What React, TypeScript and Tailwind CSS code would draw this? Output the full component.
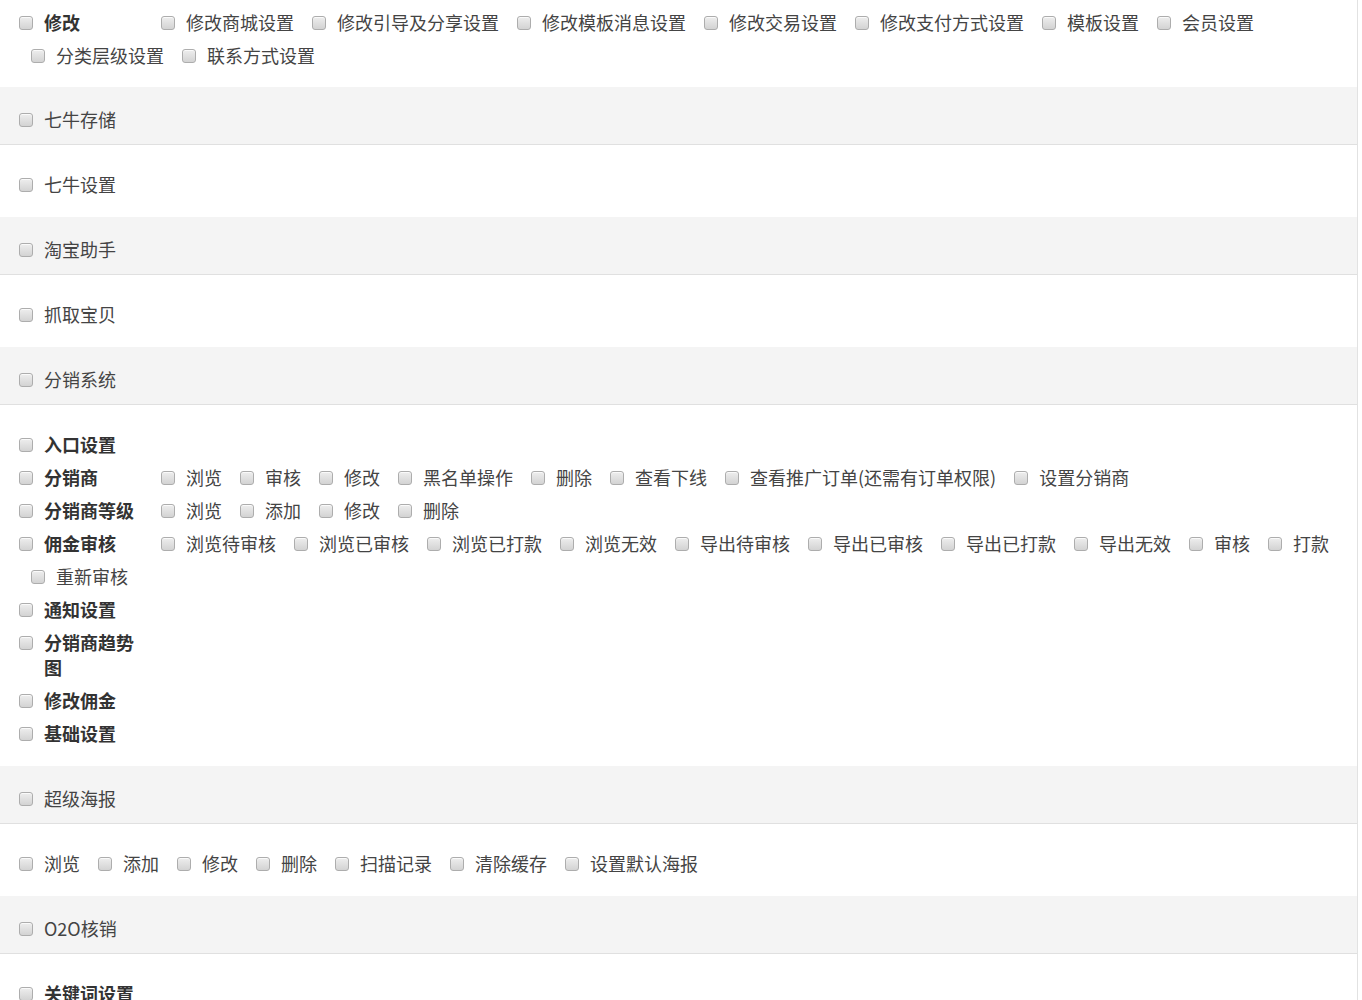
import React from 'react';

type Row = { label: string; subs?: string[] };

type Section = {
  title?: string;
  rows?: Row[];
  leaves?: string[];
  top?: boolean;
};

const sections: Section[] = [
  {
    top: true,
    rows: [
      {
        label: '修改',
        subs: [
          '修改商城设置',
          '修改引导及分享设置',
          '修改模板消息设置',
          '修改交易设置',
          '修改支付方式设置',
          '模板设置',
          '会员设置',
          '分类层级设置',
          '联系方式设置',
        ],
      },
    ],
  },
  { title: '七牛存储', leaves: ['七牛设置'] },
  { title: '淘宝助手', leaves: ['抓取宝贝'] },
  {
    title: '分销系统',
    rows: [
      { label: '入口设置' },
      {
        label: '分销商',
        subs: ['浏览', '审核', '修改', '黑名单操作', '删除', '查看下线', '查看推广订单(还需有订单权限)', '设置分销商'],
      },
      { label: '分销商等级', subs: ['浏览', '添加', '修改', '删除'] },
      {
        label: '佣金审核',
        subs: [
          '浏览待审核',
          '浏览已审核',
          '浏览已打款',
          '浏览无效',
          '导出待审核',
          '导出已审核',
          '导出已打款',
          '导出无效',
          '审核',
          '打款',
          '重新审核',
        ],
      },
      { label: '通知设置' },
      { label: '分销商趋势图' },
      { label: '修改佣金' },
      { label: '基础设置' },
    ],
  },
  {
    title: '超级海报',
    leaves: ['浏览', '添加', '修改', '删除', '扫描记录', '清除缓存', '设置默认海报'],
  },
  { title: 'O2O核销', rows: [{ label: '关键词设置' }] },
];

const Box = () => (
  <span className="mt-[6px] h-[14px] w-[14px] flex-none rounded-[3px] border border-[#adadad] bg-linear-to-b from-[#eeeeee] to-[#d3d3d3] shadow-[inset_0_1px_0_#fafafa]" />
);

const Check = ({ text, bold, className }: { text: string; bold?: boolean; className?: string }) => (
  <label className={`flex items-start gap-[11px] ${className ?? ''}`}>
    <Box />
    <span className={bold ? 'font-bold text-[#333]' : 'text-[#444]'}>{text}</span>
  </label>
);

export default function App() {
  return (
    <div className="min-h-screen bg-white font-['Noto_Sans_CJK_SC',sans-serif] text-[18px] leading-[25px]">
      <div className="w-[1358px] border-r border-[#e2e2e2]">
        {sections.map((s, i) => (
          <div key={i}>
            {s.title && (
              <div className="border-b border-[#e0e0e0] bg-[#f4f4f4] pb-[12px] pl-[19px] pt-[20px]">
                <Check text={s.title} />
              </div>
            )}
            <div className={s.top ? 'pb-[11px] pl-[19px] pt-[10px]' : 'pb-[12px] pl-[19px] pt-[27px]'}>
              {s.leaves && (
                <div className="flex flex-wrap">
                  {s.leaves.map((l, j) => (
                    <Check key={j} text={l} className="mb-[8px] mr-[18px]" />
                  ))}
                </div>
              )}
              {s.rows &&
                s.rows.map((r, j) => (
                  <div key={j} className="flex flex-wrap pr-[20px]">
                    <Check text={r.label} bold className="mb-[8px] mr-[6px] w-[124px] flex-none" />
                    {r.subs?.map((t, k) => (
                      <Check key={k} text={t} className="mb-[8px] ml-[12px] mr-[6px] flex-none" />
                    ))}
                  </div>
                ))}
            </div>
          </div>
        ))}
      </div>
    </div>
  );
}
